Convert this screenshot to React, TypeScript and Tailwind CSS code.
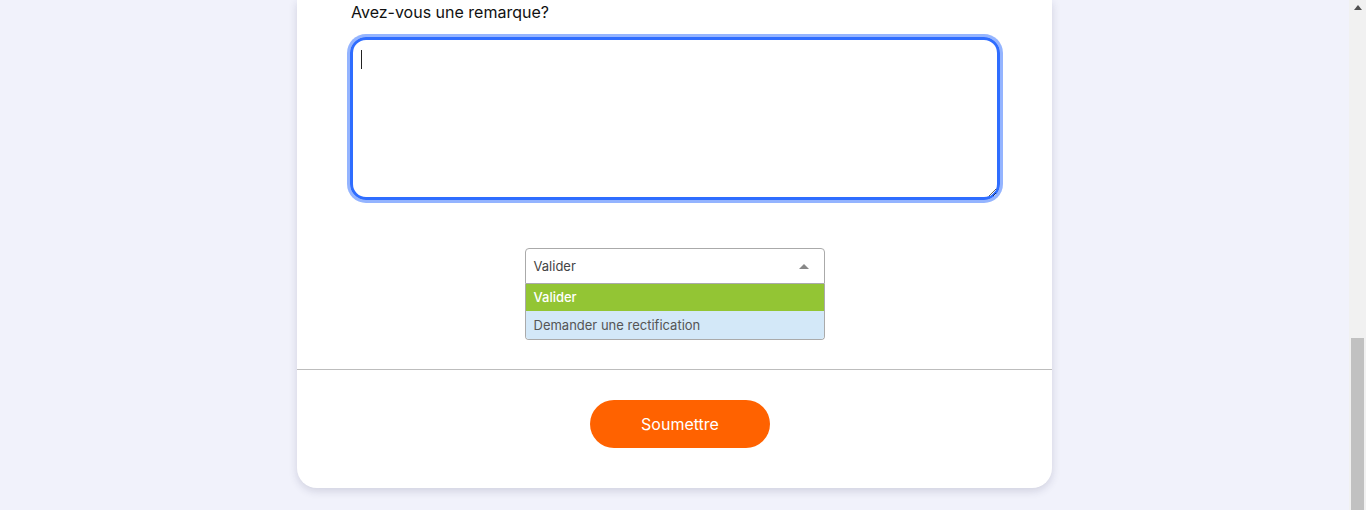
import React from "react";

export default function App() {
  return (
    <div className="flex h-[510px] w-full overflow-hidden bg-[#f1f2fb]" style={{ fontFamily: "Inter, 'Noto Sans', sans-serif" }}>
      <div className="flex flex-1 justify-center">
        <div className="flex h-[488px] w-[755px] flex-col rounded-b-[20px] bg-white shadow-[0_3px_8px_rgba(40,40,80,0.16)]">
          <div className="flex flex-col pl-[53px] pr-[52px]">
            <label className="ml-px text-[16px] leading-[24px] text-[#111]">Avez-vous une remarque?</label>
            <div className="relative mt-[13px]">
              <textarea
                className="block h-[163px] w-full resize-y rounded-[16px] border-[3px] border-[#2f6dff] px-[8px] py-[8px] text-[14px] shadow-[0_0_0_3px_#94b4ff] outline-none"
                defaultValue=""
              />
              <span className="pointer-events-none absolute left-[11px] top-[13px] h-[19px] w-px bg-[#222]" />
            </div>
          </div>
          <div className="mt-[48px] flex justify-center">
            <div className="flex w-[300px] flex-col text-[13px]">
              <div className="flex h-[36px] items-center justify-between rounded-t-[4px] border border-[#aaa] bg-white pl-[8px] pr-[15px] pt-[2px] text-[#444]">
                <span>Valider</span>
                <svg width="10" height="5" viewBox="0 0 10 5" className="mb-[2px]"><path d="M0 5 L5 0 L10 5 Z" fill="#888" /></svg>
              </div>
              <div className="flex flex-col overflow-hidden rounded-b-[4px] border border-t-0 border-[#aaa]">
                <div className="flex h-[27px] items-center bg-[#93c534] pl-[8px] font-medium text-white">Valider</div>
                <div className="flex h-[28px] items-center bg-[#d3e8f8] pl-[8px] pt-px text-[#555]">Demander une rectification</div>
              </div>
            </div>
          </div>
          <div className="mt-[29px] h-px w-full bg-[#bdbdbd]" />
          <div className="mt-[30px] flex justify-center pl-[11px]">
            <button className="h-[48px] w-[180px] rounded-full bg-[#ff6200] text-[16px] text-white">Soumettre</button>
          </div>
        </div>
      </div>
      <div className="flex h-full w-[17px] flex-col bg-[#f1f1f1]">
        <div className="flex h-[14px] items-center justify-center pt-[1px]">
          <svg width="8" height="5" viewBox="0 0 8 5"><path d="M0 5 L4 0 L8 5 Z" fill="#505050" /></svg>
        </div>
        <div className="flex-1" />
        <div className="mx-[2px] h-[172px] bg-[#c1c1c1]" />
      </div>
    </div>
  );
}
